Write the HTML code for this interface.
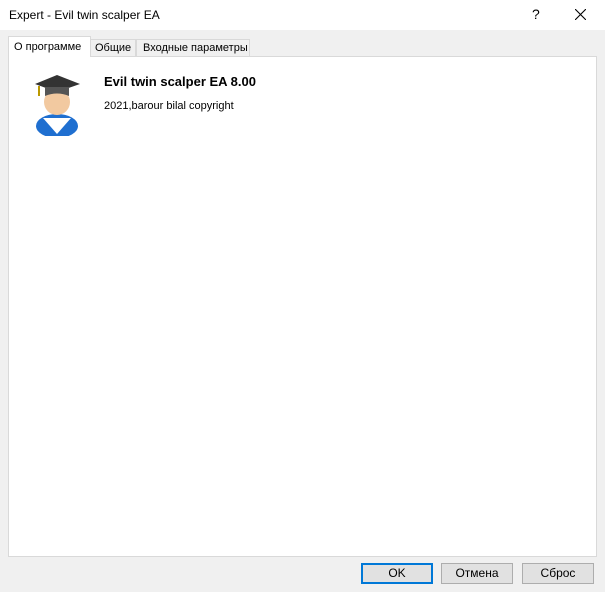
<!DOCTYPE html><html><head><meta charset="utf-8"><style>
body{margin:0;width:605px;height:592px;background:#f0f0f0;font-family:"Liberation Sans",sans-serif;font-size:12px;position:relative;overflow:hidden}
.t{position:absolute;left:0;top:0;width:605px;height:30px;background:#fff}
.t span{position:absolute;left:9px;top:8px;font-size:12px;color:#000}
.tab{position:absolute;top:39px;height:17px;border:1px solid #d9d9d9;border-bottom:none;background:#f0f0f0;font-size:11px;line-height:17px;padding:0 0 0 4px;box-sizing:border-box;white-space:nowrap;overflow:hidden}
.panel{position:absolute;left:8px;top:56px;width:589px;height:501px;background:#fff;border:1px solid #d9d9d9;box-sizing:border-box}
.b{position:absolute;top:563px;width:72px;height:21px;background:#e1e1e1;border:1px solid #adadad;box-sizing:border-box;text-align:center;line-height:19px;font-size:12px}
</style></head><body>
<div class="t"><span>Expert - Evil twin scalper EA</span>
<span style="left:532px;top:6px;font-size:14px">?</span>
<svg style="position:absolute;left:575px;top:9px" width="11" height="11"><path d="M0 0L11 11M11 0L0 11" stroke="#000" stroke-width="1.1"/></svg></div>
<div class="panel"></div>
<div class="tab" style="left:90px;width:46px">Общие</div>
<div class="tab" style="left:136px;width:114px;padding-left:6px">Входные параметры</div>
<div class="tab" style="left:8px;top:36px;height:21px;width:83px;background:#fff;line-height:20px;padding-left:5px">О программе</div>
<svg style="position:absolute;left:33px;top:72px" width="52" height="64">
<ellipse cx="24" cy="54" rx="21" ry="12" fill="#1f6fd0"/>
<path d="M10 46 L24 62 L38 46 Z" fill="#fff"/>
<circle cx="24" cy="30" r="13" fill="#f2c9a0"/>
<path d="M2 12 L24 3 L47 12 L24 20Z" fill="#333"/>
<path d="M12 15 L12 24 Q24 19 36 24 L36 15 Z" fill="#555"/>
<path d="M6 14 L6 24" stroke="#b90" stroke-width="2"/>
</svg>
<div style="position:absolute;left:104px;top:74px;font-weight:bold;font-size:13px">Evil twin scalper EA 8.00</div>
<div style="position:absolute;left:104px;top:100px;font-size:11px">2021,barour bilal copyright</div>
<div class="b" style="left:361px;border:2px solid #0078d7;line-height:17px">OK</div>
<div class="b" style="left:441px">Отмена</div>
<div class="b" style="left:522px">Сброс</div>
</body></html>
